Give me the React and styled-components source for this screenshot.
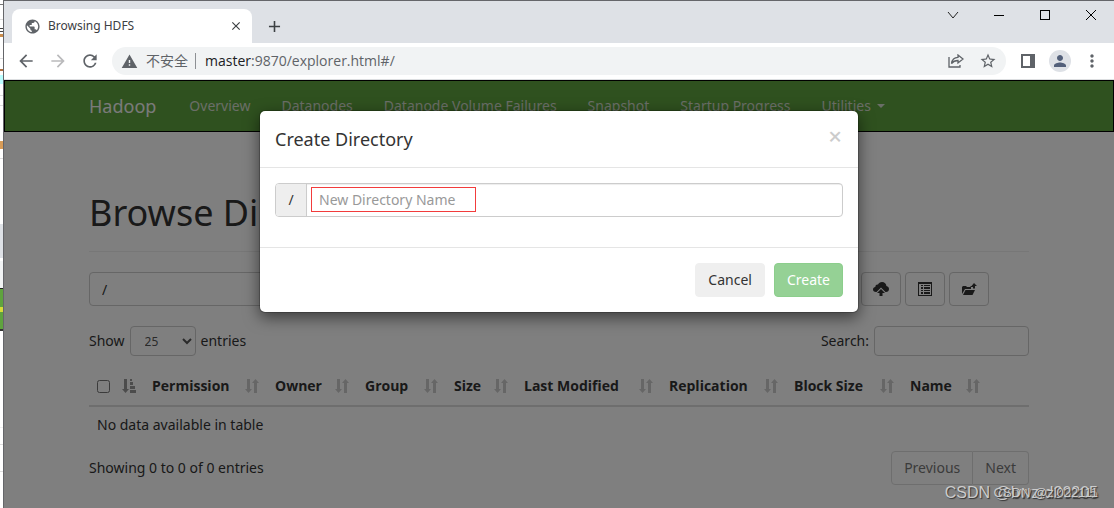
import { useState } from "react";
import styled, { createGlobalStyle } from "styled-components";
import {
  MdAdd,
  MdArrowBack,
  MdArrowForward,
  MdClose,
  MdMoreVert,
  MdPerson,
  MdPublic,
  MdRefresh,
  MdStarBorder,
  MdWarning,
} from "react-icons/md";

const navItems = [
  "Overview",
  "Datanodes",
  "Datanode Volume Failures",
  "Snapshot",
  "Startup Progress",
];

const columns = [
  { label: "Permission", width: 123 },
  { label: "Owner", width: 90 },
  { label: "Group", width: 89 },
  { label: "Size", width: 70 },
  { label: "Last Modified", width: 145 },
  { label: "Replication", width: 125 },
  { label: "Block Size", width: 116 },
  { label: "Name", width: 86 },
];

const SortIcon = () => (
  <svg width="14" height="14" viewBox="0 0 14 14" fill="currentColor" aria-hidden="true">
    <path d="M2 0h3v10h2L3.500 14 0 10h2zM9 14h3V4h2L10.500 0 7 4h2z" />
  </svg>
);

const SortAscIcon = () => (
  <svg width="14" height="14" viewBox="0 0 14 14" fill="currentColor" aria-hidden="true">
    <path d="M2 0h3v10h2L3.500 14 0 10h2zM8 0h2v2H8zM8 3h3v3H8zM8 7h5v3H8zM8 11h6v3H8z" />
  </svg>
);

const CloudUploadIcon = () => (
  <svg width="16" height="14" viewBox="0 0 16 14" fill="currentColor" aria-hidden="true">
    <path d="M3 10C1 10 0 9 0 7.500 0 6 1 5 2.300 5 2.300 3 4 2.200 5 2.600 5.800 1 7 0 9 0c2.500 0 4.400 1.800 4.400 4C15 4.300 16 5.500 16 7c0 1.800-1.200 3-3 3h-.500L8 5.500 3.500 10z" />
    <path d="M8 7l4 4H9.500v3h-3v-3H4z" />
  </svg>
);

const ListIcon = () => (
  <svg width="14" height="14" viewBox="0 0 14 14" fill="currentColor" aria-hidden="true">
    <path fillRule="evenodd" d="M0 0h14v14H0zM1 2v11h12V2z" />
    <path d="M3 3h2v1H3zM6 3h6v1H6zM3 5h2v2H3zM6 5h6v2H6zM3 8h2v1H3zM6 8h6v1H6zM3 10h2v2H3zM6 10h6v2H6z" />
  </svg>
);

const FolderUpIcon = () => (
  <svg width="15" height="13" viewBox="0 0 15 13" fill="currentColor" aria-hidden="true">
    <path d="M0 11V4l1-1h3l1 1h4v2H3zM3.500 7H13l-2.500 5H1z" />
    <path d="M12 0l3 3h-2v2.500h-2V4H8.500V3H11V3H9.500z" />
  </svg>
);

const ShareIcon = () => (
  <svg width="16" height="14" viewBox="0 0 16 14" fill="none" stroke="currentColor" strokeWidth="1.300" aria-hidden="true">
    <path d="M1 3v10h11v-2" />
    <path d="M10 1l5 4-5 4V6.500C7 6.500 5 7.500 3.500 9.500 4 6 6 3.500 10 3.400z" />
  </svg>
);

const SidePanelIcon = () => (
  <svg width="14" height="14" viewBox="0 0 14 14" aria-hidden="true">
    <path fill="#5f6368" fillRule="evenodd" d="M0 0h14v14H0zM2 2v10h7V2z" />
  </svg>
);

const App = () => {
  const [dirName, setDirName] = useState("");
  const [path, setPath] = useState("/");

  return (
    <Desktop>
      <GlobalStyle />
      <BackWindowEdge />
      <Browser>
        <TabStrip>
          <Tab>
            <MdPublic size={17} color="#5f6368" />
            <TabTitle>Browsing HDFS</TabTitle>
            <IconButton aria-label="Close tab">
              <MdClose size={14} />
            </IconButton>
          </Tab>
          <NewTabButton aria-label="New tab">
            <MdAdd size={19} />
          </NewTabButton>
          <WindowControls>
            <WindowButton aria-label="Search tabs">
              <svg width="12" height="12" viewBox="0 0 12 12" fill="none" stroke="#222">
                <path d="M1 3l5 6 5-6" />
              </svg>
            </WindowButton>
            <WindowButton aria-label="Minimize">
              <svg width="12" height="12" viewBox="0 0 12 12" stroke="#000">
                <path d="M1 6.500h10" />
              </svg>
            </WindowButton>
            <WindowButton aria-label="Maximize">
              <svg width="12" height="12" viewBox="0 0 12 12" fill="none" stroke="#000">
                <rect x="1.500" y="1.500" width="9" height="9" />
              </svg>
            </WindowButton>
            <WindowButton aria-label="Close window">
              <svg width="12" height="12" viewBox="0 0 12 12" stroke="#000">
                <path d="M1 1l10 10M11 1L1 11" />
              </svg>
            </WindowButton>
          </WindowControls>
        </TabStrip>

        <Toolbar>
          <ToolButton aria-label="Back">
            <MdArrowBack size={20} />
          </ToolButton>
          <ToolButton aria-label="Forward" disabled>
            <MdArrowForward size={20} />
          </ToolButton>
          <ToolButton aria-label="Reload">
            <MdRefresh size={20} />
          </ToolButton>
          <AddressBar>
            <MdWarning size={17} />
            <Insecure>不安全</Insecure>
            <Url>
              <b>master</b>:9870/explorer.html#/
            </Url>
            <ToolButton aria-label="Share">
              <ShareIcon />
            </ToolButton>
            <ToolButton aria-label="Bookmark">
              <MdStarBorder size={18} />
            </ToolButton>
          </AddressBar>
          <ToolButton aria-label="Side panel">
            <SidePanelIcon />
          </ToolButton>
          <ProfileButton aria-label="Profile">
            <MdPerson size={18} />
          </ProfileButton>
          <ToolButton aria-label="Menu">
            <MdMoreVert size={20} />
          </ToolButton>
        </Toolbar>

        <Viewport>
          <Navbar>
            <NavInner>
              <Brand href="#">Hadoop</Brand>
              {navItems.map((item) => (
                <NavLink href="#" key={item}>
                  {item}
                </NavLink>
              ))}
              <NavLink href="#">
                Utilities
                <Caret />
              </NavLink>
            </NavInner>
          </Navbar>

          <Container>
            <PageHeader>
              <h1>Browse Directory</h1>
            </PageHeader>
            <PathRow>
              <PathInput
                aria-label="Path"
                value={path}
                onChange={(e) => setPath(e.target.value)}
              />
              <DefaultButton aria-label="Upload files">
                <CloudUploadIcon />
              </DefaultButton>
              <DefaultButton aria-label="Cut and paste">
                <ListIcon />
              </DefaultButton>
              <DefaultButton aria-label="Parent directory">
                <FolderUpIcon />
              </DefaultButton>
            </PathRow>

            <TableControls>
              <ControlLabel>
                Show
                <LengthSelect defaultValue="25">
                  <option>25</option>
                  <option>50</option>
                  <option>100</option>
                </LengthSelect>
                entries
              </ControlLabel>
              <ControlLabel>
                Search:
                <SearchInput type="search" />
              </ControlLabel>
            </TableControls>

            <Table>
              <thead>
                <tr>
                  <Th $width={55}>
                    <HeadCell>
                      <input type="checkbox" aria-label="Select all" />
                      <SortMark $active>
                        <SortAscIcon />
                      </SortMark>
                    </HeadCell>
                  </Th>
                  {columns.map((col) => (
                    <Th key={col.label} $width={col.width}>
                      <HeadCell>
                        {col.label}
                        <SortMark>
                          <SortIcon />
                        </SortMark>
                      </HeadCell>
                    </Th>
                  ))}
                  <Th />
                </tr>
              </thead>
              <tbody>
                <tr>
                  <td colSpan={10}>No data available in table</td>
                </tr>
              </tbody>
            </Table>

            <TableFooter>
              <span>Showing 0 to 0 of 0 entries</span>
              <Pagination>
                <button>Previous</button>
                <button>Next</button>
              </Pagination>
            </TableFooter>
          </Container>

          <Backdrop>
            <Modal role="dialog" aria-labelledby="create-title">
              <ModalHeader>
                <h4 id="create-title">Create Directory</h4>
                <CloseButton aria-label="Close">×</CloseButton>
              </ModalHeader>
              <ModalBody>
                <InputGroup>
                  <Addon htmlFor="new-directory">/</Addon>
                  <DirectoryField>
                    <input
                      id="new-directory"
                      placeholder="New Directory Name"
                      value={dirName}
                      onChange={(e) => setDirName(e.target.value)}
                    />
                  </DirectoryField>
                </InputGroup>
              </ModalBody>
              <ModalFooter>
                <CancelButton>Cancel</CancelButton>
                <CreateButton>Create</CreateButton>
              </ModalFooter>
            </Modal>
          </Backdrop>

          <Watermark $size={16}>CSDN @bwzrd20205</Watermark>
          <Watermark $size={13}>CSDN @zl022111</Watermark>
        </Viewport>
      </Browser>
    </Desktop>
  );
};

const GlobalStyle = createGlobalStyle`
  * {
    box-sizing: border-box;
  }

  body {
    margin: 0;
    font-family: "Open Sans", "Noto Sans CJK SC", sans-serif;
    font-size: 14px;
    line-height: 20px;
    color: #333;
  }

  button, input, select {
    font-family: inherit;
  }

  svg {
    display: block;
    flex: none;
  }
`;

const Desktop = styled.div`
  display: flex;
  min-height: 100vh;
`;

/* edge of the window lying behind the browser */
const BackWindowEdge = styled.div`
  width: 3px;
  flex: none;
  background: linear-gradient(
    #fff 4px, #777 4px 5px, #fff 5px 19px, #ddd 19px 20px,
    #fff 20px 28px, #444 28px 29px, #fff 29px 31px, #444 31px 32px,
    #fff 32px 34px, #c98c4c 34px 37px, #fff 37px 58px, #ddd 58px 59px,
    #fff 59px 69px, #b07040 69px 71px, #fff 71px 75px, #bff 75px 84px,
    #fff 84px 95px, #ddd 95px 96px, #fff 96px 105px, #ddd 105px 106px,
    #fff 106px 141px, #d89c58 141px 149px, #fff 149px 158px, #ddd 158px 159px,
    #fff 159px 224px, #dee1e6 224px 258px, #fff 258px 261px, #f1f3f4 261px 288px,
    #222 288px 289px, #5fa33e 289px 307px, #d5dc38 307px 312px, #5fa33e 312px 329px,
    #333 329px 331px, #fff 331px 427px, #f0f0f0 427px 428px, #fff 428px 444px,
    #ddd 444px 445px, #fff 445px 471px, #ddd 471px 472px, #fff 472px
  );
`;

const Browser = styled.div`
  flex: 1;
  min-width: 0;
  display: flex;
  flex-direction: column;
  border-top: 1px solid #65666a;
  border-left: 1px solid #65666a;
`;

const TabStrip = styled.div`
  display: flex;
  height: 42px;
  padding-left: 8px;
  background: #dee1e6;
`;

const Tab = styled.div`
  display: flex;
  align-items: center;
  width: 240px;
  margin-top: 8px;
  padding: 0 9px 0 12px;
  background: #fff;
  border-radius: 8px 8px 0 0;
`;

const TabTitle = styled.span`
  flex: 1;
  margin-left: 7px;
  font-family: "Noto Sans", sans-serif;
  font-size: 12px;
  color: #3c4043;
`;

const IconButton = styled.button`
  display: flex;
  align-items: center;
  justify-content: center;
  padding: 0;
  border: 0;
  background: none;
  color: #3c4043;
`;

const NewTabButton = styled(IconButton)`
  width: 28px;
  height: 34px;
  margin: 8px 0 0 8px;
`;

const WindowControls = styled.div`
  display: flex;
  margin-left: auto;
`;

const WindowButton = styled(IconButton)`
  width: 46px;
  height: 28px;
`;

const Toolbar = styled.div`
  display: flex;
  align-items: center;
  height: 37px;
  padding: 0 6px;
  border-bottom: 1px solid #dcdee0;
  background: #fff;
`;

const ToolButton = styled(IconButton)`
  width: 32px;
  height: 28px;
  color: ${(props) => (props.disabled ? "#bababc" : "#5f6368")};
`;

const ProfileButton = styled(IconButton)`
  width: 22px;
  height: 22px;
  margin: 0 5px;
  border-radius: 50%;
  background: #dee1e6;
  color: #53607a;
`;

const AddressBar = styled.div`
  flex: 1;
  display: flex;
  align-items: center;
  height: 28px;
  margin: 0 6px;
  padding: 0 2px 0 9px;
  border-radius: 14px;
  background: #f1f3f4;
  color: #5f6368;
`;

const Insecure = styled.span`
  margin-left: 8px;
  padding-right: 7px;
  border-right: 1px solid #8d9094;
  line-height: 16px;
`;

const Url = styled.span`
  flex: 1;
  margin-left: 9px;

  b {
    font-weight: 400;
    color: #202124;
  }
`;

const Viewport = styled.div`
  position: relative;
  flex: 1;
  background: #fff;
  font-family: "Noto Sans", sans-serif;
  overflow: hidden;
`;

const Navbar = styled.nav`
  border: 1px solid #000;
  background: #5fa33e;
`;

const NavInner = styled.div`
  display: flex;
  max-width: 970px;
  margin: 0 auto;
`;

const NavLink = styled.a`
  display: flex;
  align-items: center;
  padding: 15px 16px 15px 15px;
  color: #d5dccf;
  text-decoration: none;
  white-space: nowrap;
`;

const Brand = styled(NavLink)`
  padding-right: 18px;
  font-size: 18px;
  color: #f5f5f5;
`;

const Caret = styled.span`
  margin-left: 6px;
  border-top: 4px solid;
  border-right: 4px solid transparent;
  border-left: 4px solid transparent;
`;

const Container = styled.main`
  max-width: 970px;
  margin: 0 auto;
  padding: 61px 15px 20px;
`;

const PageHeader = styled.div`
  margin-bottom: 20px;
  padding-bottom: 18px;
  border-bottom: 1px solid #eee;

  h1 {
    margin: 0;
    font-size: 36px;
    font-weight: 400;
    line-height: 40px;
  }
`;

const PathRow = styled.div`
  display: flex;
  gap: 4px;
  padding-right: 40px;
`;

const controlBox = `
  border: 1px solid #ccc;
  border-radius: 4px;
  background: #fff;
  color: #333;
`;

const PathInput = styled.input`
  ${controlBox}
  flex: 1;
  height: 34px;
  padding: 6px 12px;
  font-size: 14px;
`;

const DefaultButton = styled.button`
  ${controlBox}
  display: flex;
  align-items: center;
  justify-content: center;
  width: 40px;
  height: 34px;
  padding: 0;
`;

const TableControls = styled.div`
  display: flex;
  justify-content: space-between;
  margin-top: 20px;
`;

const ControlLabel = styled.label`
  display: flex;
  align-items: center;
  gap: 5px;
`;

const LengthSelect = styled.select`
  ${controlBox}
  width: 66px;
  height: 30px;
  padding: 5px 10px;
  font-size: 12px;
  color: #555;
`;

const SearchInput = styled.input`
  ${controlBox}
  width: 155px;
  height: 30px;
  padding: 5px 10px;
  font-size: 12px;
`;

const Table = styled.table`
  width: 100%;
  margin-top: 9px;
  border-collapse: collapse;
  table-layout: fixed;

  td {
    padding: 8px;
  }
`;

const Th = styled.th`
  width: ${(props) => (props.$width ? `${props.$width}px` : "auto")};
  height: 41px;
  padding: 2px 8px 0;
  border-bottom: 2px solid #ddd;
  text-align: left;
  font-family: "Open Sans", sans-serif;
  font-weight: 700;
`;

const HeadCell = styled.div`
  display: flex;
  align-items: center;
  justify-content: space-between;
  white-space: nowrap;

  input {
    width: 13px;
    height: 13px;
    margin: 0;
  }
`;

const SortMark = styled.span`
  color: ${(props) => (props.$active ? "#999" : "#ccc")};
`;

const TableFooter = styled.div`
  display: flex;
  justify-content: space-between;
  align-items: center;
  margin-top: 8px;
`;

const Pagination = styled.div`
  display: flex;

  button {
    height: 34px;
    padding: 6px 12px;
    border: 1px solid #ddd;
    background: #fff;
    color: #777;
    font-size: 14px;
    line-height: 20px;
  }

  button:first-child {
    border-radius: 4px 0 0 4px;
  }

  button:last-child {
    border-left: 0;
    border-radius: 0 4px 4px 0;
  }
`;

const Backdrop = styled.div`
  position: absolute;
  inset: 0;
  background: rgba(0, 0, 0, 0.5);
`;

const Modal = styled.div`
  max-width: 600px;
  margin: 30px auto;
  border: 1px solid rgba(0, 0, 0, 0.2);
  border-radius: 6px;
  background: #fff;
  background-clip: padding-box;
  box-shadow: 0 5px 15px rgba(0, 0, 0, 0.5);
`;

const ModalHeader = styled.div`
  display: flex;
  justify-content: space-between;
  align-items: flex-start;
  padding: 15px;
  border-bottom: 1px solid #e5e5e5;

  h4 {
    margin: 0;
    font-size: 18px;
    font-weight: 400;
    line-height: 26px;
  }
`;

const CloseButton = styled.button`
  padding: 0 1px;
  border: 0;
  background: none;
  color: #ccc;
  font-size: 24px;
  font-weight: 500;
  line-height: 20px;
`;

const ModalBody = styled.div`
  padding: 15px 15px 30px;
`;

const InputGroup = styled.div`
  display: flex;
  height: 34px;
  border: 1px solid #ccc;
  border-radius: 4px;
  overflow: hidden;
`;

const Addon = styled.label`
  width: 31px;
  padding: 6px 0;
  border-right: 1px solid #ccc;
  background: #eee;
  text-align: center;
`;

const DirectoryField = styled.div`
  flex: 1;
  padding: 3px 4px;
  box-shadow: inset 0 1px 1px rgba(0, 0, 0, 0.075);

  input {
    display: block;
    width: 165px;
    height: 25px;
    padding: 0 7px;
    border: 1px solid #f23c3c;
    background: none;
    color: #555;
    font-size: 14px;
  }

  input::placeholder {
    color: #999;
  }
`;

const ModalFooter = styled.div`
  display: flex;
  justify-content: flex-end;
  gap: 9px;
  padding: 15px;
  border-top: 1px solid #e5e5e5;
`;

const CancelButton = styled.button`
  height: 34px;
  padding: 6px 12px;
  border: 1px solid #efefef;
  border-radius: 4px;
  background: #efefef;
  color: #333;
  font-size: 14px;
  line-height: 20px;
`;

const CreateButton = styled(CancelButton)`
  border-color: #8cce8c;
  background: #95d195;
  color: #fff;
`;

const Watermark = styled.span`
  position: absolute;
  right: 16px;
  bottom: 5px;
  color: #ccc;
  font-family: "Liberation Sans", sans-serif;
  font-size: ${(props) => props.$size}px;
  text-shadow: 1px 1px 1px #333;
`;

export default App;
